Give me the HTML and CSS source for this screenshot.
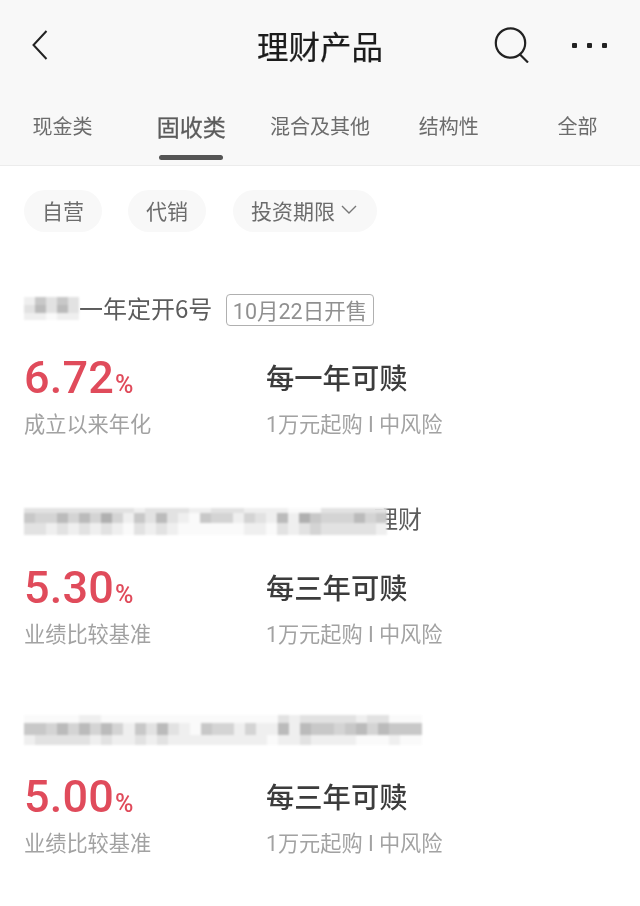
FILE: index.html
```html
<!DOCTYPE html>
<html lang="zh-CN">
<head>
<meta charset="utf-8">
<title>理财产品</title>
<link rel="stylesheet" href="styles.css">
</head>
<body>
<header class="head">
  <div class="nav">
    <div class="nav-left">
      <svg class="ico-back" viewBox="0 0 16 30" width="16" height="30"><path d="M14.500 1 1.500 15l13 14" fill="none" stroke="#222" stroke-width="2"/></svg>
    </div>
    <h1 class="page-title">理财产品</h1>
    <div class="nav-right">
      <svg class="ico-search" viewBox="0 0 36 36" width="36" height="36"><circle cx="16.500" cy="16" r="14.700" fill="none" stroke="#222" stroke-width="2.200"/><path d="M26 27.500l8 8" fill="none" stroke="#222" stroke-width="2.200"/></svg>
      <div class="dots"><i></i><i></i><i></i></div>
    </div>
  </div>
  <nav class="tabs">
    <a class="tab">现金类</a>
    <a class="tab active">固收类</a>
    <a class="tab">混合及其他</a>
    <a class="tab">结构性</a>
    <a class="tab">全部</a>
  </nav>
</header>

<div class="filters">
  <span class="chip">自营</span>
  <span class="chip">代销</span>
  <span class="chip chip-drop">投资期限<svg viewBox="0 0 16 10" width="16" height="10"><path d="M1 1l7 7 7-7" fill="none" stroke="#777" stroke-width="1.400"/></svg></span>
</div>

<main class="list">
  <article class="item">
    <div class="name">
      <div class="mosaic m-short">
        <i class="f"></i><i class="c"></i><i class="e"></i><i class="c"></i><i class="e"></i>
        <i class="e"></i><i class="b"></i><i class="e"></i><i class="b"></i><i class="e"></i>
        <i class="f"></i><i class="f"></i><i class="w"></i><i class="f"></i><i class="f"></i>
      </div><span class="name-text">一年定开6号</span><span class="tag">10月22日开售</span>
    </div>
    <div class="stats">
      <div class="rate">6.72<small>%</small></div>
      <div class="term">每一年可赎</div>
      <div class="note">成立以来年化</div>
      <div class="note">1万元起购 I 中风险</div>
    </div>
  </article>

  <article class="item">
    <div class="name">
      <div class="mosaic m-mid">
        <i class="e"></i><i class="e"></i><i class="e"></i><i class="e"></i><i class="e"></i><i class="e"></i><i class="e"></i><i class="e"></i><i class="e"></i><i class="e"></i><i class="f"></i><i class="e"></i><i class="e"></i><i class="e"></i><i class="e"></i><i class="f"></i><i class="f"></i><i class="e"></i><i class="e"></i><i class="e"></i><i class="f"></i><i class="f"></i><i class="f"></i><i class="f"></i><i class="w"></i><i class="w"></i><i class="w"></i><i class="e"></i><i class="e"></i><i class="e"></i><i class="e"></i><i class="e"></i><i class="e"></i>
        <i class="c"></i><i class="d"></i><i class="d"></i><i class="b"></i><i class="d"></i><i class="b"></i><i class="d"></i><i class="a"></i><i class="d"></i><i class="f"></i><i class="c"></i><i class="e"></i><i class="b"></i><i class="e"></i><i class="f"></i><i class="w"></i><i class="c"></i><i class="d"></i><i class="d"></i><i class="f"></i><i class="d"></i><i class="e"></i><i class="f"></i><i class="b"></i><i class="f"></i><i class="a"></i><i class="c"></i><i class="d"></i><i class="d"></i><i class="d"></i><i class="b"></i><i class="d"></i><i class="c"></i>
        <i class="e"></i><i class="e"></i><i class="f"></i><i class="e"></i><i class="f"></i><i class="e"></i><i class="f"></i><i class="e"></i><i class="f"></i><i class="w"></i><i class="e"></i><i class="f"></i><i class="e"></i><i class="f"></i><i class="w"></i><i class="w"></i><i class="w"></i><i class="w"></i><i class="w"></i><i class="w"></i><i class="f"></i><i class="f"></i><i class="w"></i><i class="e"></i><i class="f"></i><i class="e"></i><i class="d"></i><i class="e"></i><i class="e"></i><i class="e"></i><i class="e"></i><i class="e"></i><i class="f"></i>
      </div><span class="name-text">理财</span>
    </div>
    <div class="stats">
      <div class="rate">5.30<small>%</small></div>
      <div class="term">每三年可赎</div>
      <div class="note">业绩比较基准</div>
      <div class="note">1万元起购 I 中风险</div>
    </div>
  </article>

  <article class="item">
    <div class="name">
      <div class="mosaic m-long">
        <i class="w"></i><i class="w"></i><i class="w"></i><i class="w"></i><i class="w"></i><i class="f"></i><i class="f"></i><i class="w"></i><i class="w"></i><i class="w"></i><i class="w"></i><i class="w"></i><i class="w"></i><i class="w"></i><i class="w"></i><i class="w"></i><i class="w"></i><i class="w"></i><i class="w"></i><i class="w"></i><i class="w"></i><i class="w"></i><i class="w"></i><i class="e"></i><i class="f"></i><i class="e"></i><i class="e"></i><i class="e"></i><i class="e"></i><i class="e"></i><i class="f"></i><i class="e"></i><i class="e"></i><i class="w"></i><i class="w"></i><i class="w"></i>
        <i class="c"></i><i class="c"></i><i class="d"></i><i class="b"></i><i class="d"></i><i class="b"></i><i class="d"></i><i class="b"></i><i class="d"></i><i class="f"></i><i class="c"></i><i class="e"></i><i class="b"></i><i class="e"></i><i class="f"></i><i class="w"></i><i class="c"></i><i class="d"></i><i class="d"></i><i class="f"></i><i class="d"></i><i class="f"></i><i class="f"></i><i class="b"></i><i class="f"></i><i class="b"></i><i class="c"></i><i class="c"></i><i class="d"></i><i class="c"></i><i class="b"></i><i class="d"></i><i class="b"></i><i class="c"></i><i class="c"></i><i class="c"></i>
        <i class="f"></i><i class="e"></i><i class="e"></i><i class="e"></i><i class="e"></i><i class="e"></i><i class="f"></i><i class="e"></i><i class="f"></i><i class="f"></i><i class="e"></i><i class="f"></i><i class="e"></i><i class="f"></i><i class="f"></i><i class="f"></i><i class="f"></i><i class="f"></i><i class="f"></i><i class="f"></i><i class="f"></i><i class="f"></i><i class="w"></i><i class="f"></i><i class="f"></i><i class="e"></i><i class="f"></i><i class="f"></i><i class="f"></i><i class="f"></i><i class="w"></i><i class="w"></i><i class="w"></i><i class="f"></i><i class="w"></i><i class="w"></i>
      </div>
    </div>
    <div class="stats">
      <div class="rate">5.00<small>%</small></div>
      <div class="term">每三年可赎</div>
      <div class="note">业绩比较基准</div>
      <div class="note">1万元起购 I 中风险</div>
    </div>
  </article>
</main>
</body>
</html>
```
FILE: styles.css
```css
* { box-sizing: border-box; }
html, body { margin: 0; padding: 0; }
body {
  width: 640px;
  height: 906px;
  overflow: hidden;
  background: #fff;
  font-family: "Noto Sans CJK SC", "Noto Sans", sans-serif;
  color: #555;
}
.head {
  height: 166px;
  background: #f8f8f8;
  border-bottom: 1px solid #ececec;
}
.head > *, .filters > *, .item > * { filter: blur(0.35px); }
.nav {
  height: 94px;
  padding-bottom: 4px;
  display: grid;
  grid-template-columns: 1fr auto 1fr;
  align-items: center;
}
.nav-left { padding-left: 32px; display: flex; align-items: center; }
.ico-back { display: block; }
.page-title {
  margin: 0;
  font-size: 31.500px;
  font-weight: 400;
  line-height: 40px;
  color: #1c1c1c;
  -webkit-text-stroke: 0.2px #1c1c1c;
}
.nav-right {
  display: flex;
  align-items: center;
  justify-content: flex-end;
  gap: 42px;
  padding-right: 33px;
}
.ico-search { display: block; }
.dots { display: flex; gap: 10px; }
.dots i { display: block; width: 5px; height: 5px; background: #222; border-radius: 1px; }
.tabs {
  display: grid;
  grid-template-columns: repeat(5, 1fr);
  width: 644px;
  margin-left: -2px;
  height: 71px;
}
.tab {
  position: relative;
  text-align: center;
  font-size: 20px;
  line-height: 30px;
  padding-top: 17px;
  color: #6c6c6c;
}
.tab.active { font-size: 23px; color: #5c5c5c; -webkit-text-stroke: 0.3px #5c5c5c; }
.tab.active::after {
  content: "";
  position: absolute;
  left: 32px;
  top: 61px;
  width: 64px;
  height: 5px;
  border-radius: 2.500px;
  background: #555;
}
.filters {
  display: flex;
  gap: 26px;
  padding: 24px 0 0 24px;
}
.chip {
  display: flex;
  align-items: center;
  justify-content: center;
  gap: 6px;
  height: 42px;
  width: 78px;
  padding-bottom: 2px;
  border-radius: 21px;
  background: #f8f8f8;
  font-size: 21px;
  color: #6c6c6c;
}
.chip-drop { width: 144px; margin-left: 1px; padding-right: 2px; }
.list { padding: 62px 0 0 24px; }
.item { height: 146px; margin-bottom: 63.500px; }
.name {
  display: flex;
  align-items: center;
  height: 32px;
  font-size: 24px;
  color: #5c5c5c;
}
.name-text { line-height: 32px; white-space: nowrap; position: relative; top: -2px; }
.mosaic { display: grid; filter: blur(0.8px); position: relative; z-index: 1; }
.mosaic i { display: block; }
.mosaic i.a { background: #b0b0b0; }
.mosaic i.b { background: #bbb; }
.mosaic i.c { background: #c8c8c8; }
.mosaic i.d { background: #d4d4d4; }
.mosaic i.e { background: #e2e2e2; }
.mosaic i.f { background: #efefef; }
.mosaic i.w { background: #fafafa; }
.m-short {
  width: 55px;
  margin-bottom: 3px;
  grid-template-columns: repeat(5, 1fr);
  grid-template-rows: 8px 8px 7px;
}
.m-mid {
  width: 363px;
  margin: 3px -13px 0 0;
  grid-template-columns: repeat(33, 1fr);
  grid-template-rows: 5px 10px 12px;
}
.m-long {
  width: 398px;
  margin-top: 1px;
  grid-template-columns: repeat(36, 1fr);
  grid-template-rows: 8px 12px 10px;
}
.tag {
  display: flex;
  align-items: center;
  height: 32px;
  margin-left: 14px;
  padding: 0 5.500px 2px;
  border: 1px solid #b0b0b0;
  border-radius: 4px;
  font-size: 21.500px;
  color: #909090;
  white-space: nowrap;
  font-family: Roboto, "Noto Sans CJK SC", sans-serif;
}
.stats {
  display: grid;
  grid-template-columns: 242px 1fr;
  grid-template-rows: 52px 30px;
  row-gap: 6px;
  margin-top: 26px;
  align-items: center;
}
.rate {
  font-family: Roboto, sans-serif;
  font-weight: 500;
  font-size: 45px;
  line-height: 52px;
  margin-top: 7px;
  color: #e04b5b;
  letter-spacing: 0.2px;
}
.rate small { font-size: 25px; font-weight: 500; margin-left: 1px; }
.term {
  font-size: 28.300px;
  font-weight: 500;
  line-height: 40px;
  margin-top: -2px;
  color: #3c3c3c;
}
.note {
  font-size: 21.200px;
  line-height: 30px;
  color: #a2a2a2;
  font-family: Roboto, "Noto Sans CJK SC", sans-serif;
  white-space: nowrap;
}
```
